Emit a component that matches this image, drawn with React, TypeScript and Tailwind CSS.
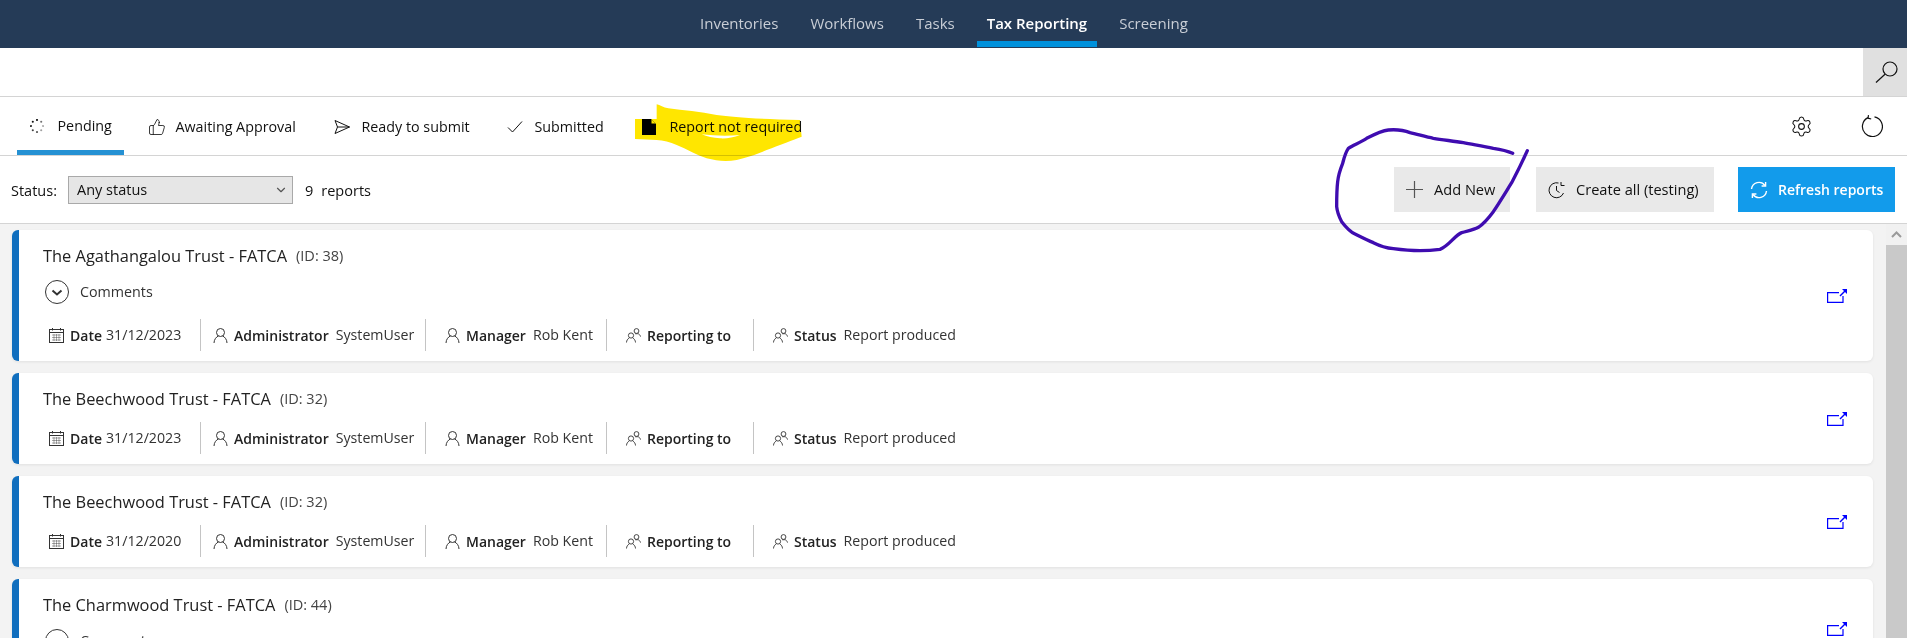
import type { ReactNode } from 'react';
import { ChevronDown, Settings, ThumbsUp } from 'lucide-react';

const navItems = ['Inventories', 'Workflows', 'Tasks', 'Tax Reporting', 'Screening'];

function Spinner() {
  const dots = [
    [7, 1, 1],
    [11.2, 2.8, 0.6],
    [13, 7, 0.35],
    [11.2, 11.2, 0.4],
    [7, 13, 0.7],
    [2.8, 11.2, 0.8],
    [1, 7, 0.9],
    [2.8, 2.8, 1],
  ];
  return (
    <svg width="14" height="14" viewBox="0 0 14 14">
      {dots.map(([x, y, o]) => (
        <circle key={`${x}-${y}`} cx={x} cy={y} r="1.05" fill="#111" opacity={o} />
      ))}
    </svg>
  );
}

function SendIcon() {
  return (
    <svg width="16" height="16" viewBox="0 0 16 16" fill="none" stroke="#111" strokeWidth="1">
      <path d="M1 1.5 15.5 8 1 14.5 3.5 8Z M3.5 8H15.5" />
    </svg>
  );
}

function CheckIcon() {
  return (
    <svg width="16" height="14" viewBox="0 0 16 14" fill="none" stroke="#111" strokeWidth="1">
      <path d="M1 7.5 5.5 12 15 1.5" />
    </svg>
  );
}

function DocIcon() {
  return (
    <svg width="14" height="16" viewBox="0 0 14 16">
      <path d="M0 0H9L14 5V16H0Z" fill="#000" />
      <path d="M9.5 0.5 13.5 4.5H9.5Z" fill="#fff" />
    </svg>
  );
}

function RestartIcon() {
  return (
    <svg width="22" height="22" viewBox="0 0 22 22" fill="none" stroke="#111" strokeWidth="1.2">
      <path d="M7 2.6A10 10 0 1 0 13.5 1.8" />
      <path d="M7.5 0.2 7 3.2 10.2 4" />
    </svg>
  );
}

function SearchIcon() {
  return (
    <svg width="23" height="22" viewBox="0 0 23 22" fill="none" stroke="#111" strokeWidth="1.2">
      <circle cx="15" cy="8" r="7" />
      <path d="M10 13.2 1 21.5" />
    </svg>
  );
}

function PlusIcon() {
  return (
    <svg width="17" height="17" viewBox="0 0 17 17" fill="none" stroke="#555" strokeWidth="1.2">
      <path d="M8.5 0V17M0 8.5H17" />
    </svg>
  );
}

function ClockIcon() {
  return (
    <svg width="17" height="18" viewBox="0 0 17 18" fill="none" stroke="#111" strokeWidth="1">
      <path d="M10.5 2A7.5 7.5 0 1 0 15.5 12" />
      <path d="M8.5 5V9.5L11.5 11.5" />
      <path d="M13 1V4.5H16.5" />
    </svg>
  );
}

function RefreshIcon() {
  return (
    <svg width="18" height="18" viewBox="0 0 18 18" fill="none" stroke="#fff" strokeWidth="1.4">
      <path d="M1.5 8A7.5 7.5 0 0 1 15 4.5" />
      <path d="M15.6 1V5H11.6" />
      <path d="M16.5 10A7.5 7.5 0 0 1 3 13.5" />
      <path d="M2.4 17V13H6.4" />
    </svg>
  );
}

function CalendarIcon() {
  return (
    <svg width="15" height="15" viewBox="0 0 15 15" fill="none" stroke="#333" strokeWidth="1">
      <rect x="0.5" y="1.5" width="14" height="13" />
      <path d="M0.5 4.5H14.5M3.5 0V2.5M11.5 0V2.5" />
      <path d="M3 7H12M3 9.5H12M3 12H12M5 6V13M7.5 6V13M10 6V13" strokeWidth="0.6" opacity="0.7" />
    </svg>
  );
}

function UserIcon() {
  return (
    <svg width="15" height="15" viewBox="0 0 15 15" fill="none" stroke="#333" strokeWidth="1">
      <circle cx="7.5" cy="4.5" r="4" />
      <path d="M1 15C1 11.5 3.5 8.5 5.5 8M14 15C14 11.5 11.5 8.5 9.5 8" />
    </svg>
  );
}

function GroupIcon() {
  return (
    <svg width="15" height="15" viewBox="0 0 15 15" fill="none" stroke="#333" strokeWidth="0.9">
      <circle cx="5" cy="7.5" r="2.6" />
      <path d="M0.5 14.5C0.5 12.5 1.8 10.8 3.2 10M9.5 14.5C9.5 12.5 8.2 10.8 6.8 10" />
      <circle cx="10.5" cy="3" r="2.4" />
      <path d="M9 5.6C9.2 5.8 11.8 5.8 12 5.6M12 5.6C13 6 14.3 7.2 14.5 8.6" />
    </svg>
  );
}

function OpenIcon() {
  return (
    <svg width="20" height="14" viewBox="0 0 20 14" fill="none" stroke="#0000ff" strokeWidth="1.2">
      <path d="M12 3.6H0.6V13.4H16V7" />
      <path d="M13 7 18 2" strokeWidth="1.5" />
      <path d="M15 0H20V5Z" fill="#0000ff" stroke="none" />
    </svg>
  );
}

function Tab({ icon, label, className }: { icon: ReactNode; label: string; className: string }) {
  return (
    <div className={`flex items-center pl-[13px] h-full ${className}`}>
      <span className="w-[27.5px] flex items-center">{icon}</span>
      <span className="whitespace-nowrap">{label}</span>
    </div>
  );
}

function Meta({ icon, label, value, className }: { icon: ReactNode; label: string; value?: string; className: string }) {
  return (
    <div className={`flex items-center h-8 whitespace-nowrap ${className}`}>
      <span className="mr-[6px] flex items-center">{icon}</span>
      <span className="font-semibold text-[#222]">{label}</span>
      {value && <span className={`text-[14.2px] text-[#333] ${label === 'Date' ? 'ml-1' : 'ml-[7px]'}`}>{value}</span>}
    </div>
  );
}

function ReportCard({
  title,
  id,
  date,
  comments,
  meta = true,
}: {
  title: string;
  id: number;
  date?: string;
  comments?: boolean;
  meta?: boolean;
}) {
  return (
    <div className="flex items-center justify-between shrink-0 bg-white border-l-[7px] border-[#106ebe] rounded-md shadow-[0_1px_3px_rgba(0,0,0,0.08)] pr-[26px]">
      <div className="pl-6 pt-[14px] pb-[10px]">
        <div className="flex items-center h-6 mb-[11px]">
          <span className="text-[16.4px] text-[#222]">{title}</span>
          <span className="ml-[9px] text-[14.5px] text-[#444]">(ID: {id})</span>
        </div>
        {comments && (
          <div className="flex items-center h-[26px] mb-[14px] pl-[2px]">
            <svg width="24" height="24" viewBox="0 0 24 24" fill="none" stroke="#333" strokeWidth="1">
              <circle cx="12" cy="12" r="11.5" />
              <path d="M7.5 10.5 12 14.5 16.5 10.5" strokeWidth="2" />
            </svg>
            <span className="ml-[11px] text-[#333]">Comments</span>
          </div>
        )}
        {meta && (
          <div className="flex items-center text-[14px]">
            <Meta icon={<CalendarIcon />} label="Date" value={date} className="w-[158px] pl-[6px] border-r border-[#c4c4c4]" />
            <Meta icon={<UserIcon />} label="Administrator" value="SystemUser" className="w-[225px] pl-3 border-r border-[#c4c4c4]" />
            <Meta icon={<UserIcon />} label="Manager" value="Rob Kent" className="w-[181px] pl-[19px] border-r border-[#c4c4c4]" />
            <Meta icon={<GroupIcon />} label="Reporting to" className="w-[147px] pl-[19px] border-r border-[#c4c4c4]" />
            <Meta icon={<GroupIcon />} label="Status" value="Report produced" className="pl-[19px]" />
          </div>
        )}
      </div>
      <OpenIcon />
    </div>
  );
}

export default function App() {
  return (
    <div className="relative w-[1907px] h-[638px] overflow-hidden flex flex-col bg-white text-[14.3px] text-[#111] font-['Open_Sans',sans-serif]">
      {/* Top nav */}
      <header className="h-12 shrink-0 bg-[#253b57] flex pl-[690px] gap-3 text-[15px] text-[#c9ced6]">
        {navItems.map((item) => {
          const active = item === 'Tax Reporting';
          return (
            <div
              key={item}
              className={`px-[10px] flex items-center h-[47px] border-b-[6px] pt-[6px] ${
                active ? 'border-[#0091dc] text-white font-semibold' : 'border-transparent'
              }`}
            >
              {item}
            </div>
          );
        })}
      </header>

      {/* Search row */}
      <div className="h-[49px] shrink-0 flex justify-end border-b border-[#d4d4d4]">
        <div className="w-11 bg-[#e0e0e0] flex items-center pl-3">
          <SearchIcon />
        </div>
      </div>

      {/* Tabs */}
      <div className="h-[59px] shrink-0 flex items-center justify-between border-b border-[#d4d4d4] pl-[17px] pr-6">
        <div className="flex h-full gap-[11px]">
          <Tab icon={<Spinner />} label="Pending" className="w-[107px] border-b-[5px] border-[#2591d3] pt-[5px]" />
          <Tab icon={<ThumbsUp size={18} strokeWidth={1.1} />} label="Awaiting Approval" className="w-[175px] pt-[2px]" />
          <Tab icon={<SendIcon />} label="Ready to submit" className="w-[162px] pt-[2px]" />
          <Tab icon={<CheckIcon />} label="Submitted" className="w-[124px] pt-[2px]" />
          <Tab icon={<DocIcon />} label="Report not required" className="pt-[2px]" />
        </div>
        <div className="flex items-center gap-[48px]">
          <Settings size={23} strokeWidth={1.1} />
          <RestartIcon />
        </div>
      </div>

      {/* Toolbar */}
      <div className="h-[68px] shrink-0 flex items-center justify-between border-b border-[#d4d4d4] pl-[11px] pr-3">
        <div className="flex items-center text-[14.5px]">
          <span className="w-[57px] pt-[2px]">Status:</span>
          <div className="w-[225px] h-7 flex items-center justify-between pl-2 pr-1 bg-[#e6e6e6] border border-[#a9a9a9]">
            <span>Any status</span>
            <ChevronDown size={14} strokeWidth={2} className="text-[#555]" />
          </div>
          <span className="ml-3 pt-[2px]">9</span>
          <span className="ml-2 pt-[2px]">reports</span>
        </div>
        <div className="flex items-center font-medium">
          <button className="w-[116px] h-[45px] bg-[#e9e9e9] flex items-center pl-3 gap-[11px] text-[14.6px]">
            <PlusIcon />
            Add New
          </button>
          <button className="w-[178px] h-[45px] ml-[26px] bg-[#e9e9e9] flex items-center pl-3 gap-[11px] text-[14.6px]">
            <ClockIcon />
            Create all (testing)
          </button>
          <button className="w-[157px] h-[45px] ml-6 bg-[#129beb] text-white flex items-center pl-3 gap-[10px] font-semibold text-[14px]">
            <RefreshIcon />
            Refresh reports
          </button>
        </div>
      </div>

      {/* Report list + scrollbar */}
      <div className="flex-1 min-h-0 flex bg-[#f3f3f3]">
        <div className="flex-1 min-w-0 flex flex-col gap-3 pt-[6px] pl-3 pr-[13px] overflow-hidden">
          <ReportCard title="The Agathangalou Trust - FATCA" id={38} date="31/12/2023" comments />
          <ReportCard title="The Beechwood Trust - FATCA" id={32} date="31/12/2023" />
          <ReportCard title="The Beechwood Trust - FATCA" id={32} date="31/12/2020" />
          <ReportCard title="The Charmwood Trust - FATCA" id={44} comments meta={false} />
        </div>
        <div className="w-[21px] shrink-0 flex flex-col bg-[#f1f1f1]">
          <div className="h-[21px] shrink-0 flex items-center justify-center">
            <svg width="11" height="7" viewBox="0 0 11 7" fill="none" stroke="#9a9a9a" strokeWidth="2">
              <path d="M1 6 5.5 1.5 10 6" />
            </svg>
          </div>
          <div className="flex-1 bg-[#c9c9c9]" />
        </div>
      </div>

      {/* Highlighter over the "Report not required" tab */}
      <svg className="absolute left-[620px] top-[95px] mix-blend-multiply" width="200" height="70" viewBox="0 0 600 210">
        <path
          fill="#ffe600"
          d="M110 28C120 30 130 38 145 40C190 46 240 50 290 60C340 66 400 72 540 75L545 125C520 135 480 150 440 165C410 178 385 186 350 195C320 200 290 198 260 190C230 180 200 162 170 150C150 142 130 135 110 135L45 132L45 72L110 72Z"
        />
        <path fill="#ffffff" d="M245 118C280 122 320 124 360 120C340 128 320 131 300 130C280 129 260 124 245 118Z" />
      </svg>

      {/* Pen scribble around the Add New button */}
      <svg className="absolute left-[1320px] top-[110px]" width="250" height="150" viewBox="0 0 750 450" fill="none" stroke="#3f0cb0" strokeWidth="10" strokeLinecap="round" strokeLinejoin="round">
        <path d="M578 130C560 122 540 118 520 115C490 108 460 104 430 98C400 93 370 90 340 85C315 80 290 72 270 68C250 60 230 58 205 60C185 62 165 72 140 85C120 98 100 105 85 115C75 130 72 145 68 160C60 180 55 195 53 215C50 240 50 265 50 290C52 310 58 322 65 335C78 352 90 365 105 372C125 382 145 392 160 398C180 408 200 414 220 416C250 420 275 422 300 422C325 422 345 420 360 418C375 412 385 402 395 392C405 382 415 372 425 368C445 362 460 360 475 352C490 342 505 325 520 305C540 275 555 250 575 218C590 190 605 160 622 122" />
      </svg>
    </div>
  );
}
